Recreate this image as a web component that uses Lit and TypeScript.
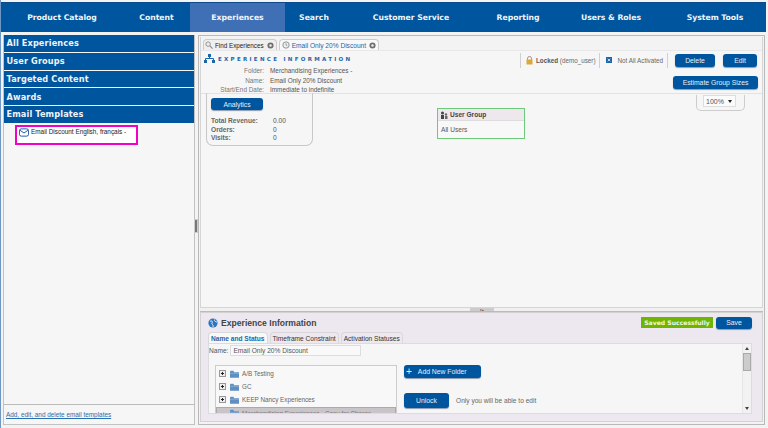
import { LitElement, html, css } from "lit";
import { customElement } from "lit/decorators.js";

const gear = html`<svg class="gear" viewBox="0 0 8 8" width="7" height="7"><circle cx="4" cy="4" r="3.5" fill="#6f6f6f"/><circle cx="4" cy="4" r="1.4" fill="#eee"/></svg>`;
const folder = html`<svg viewBox="0 0 12 10" width="9" height="8"><path d="M0 1.5 L0 10 L12 10 L12 2.5 L5.5 2.5 L4.5 .5 L1 .5 Z" fill="#5f8fc0"/><path d="M0 4 H12" stroke="#8fb4d8" stroke-width="1"/></svg>`;
const plusBox = html`<svg viewBox="0 0 7 7" width="7" height="7"><rect x=".5" y=".5" width="6" height="6" fill="#eee" stroke="#999"/><path d="M2 3.5H5M3.5 2V5" stroke="#222"/></svg>`;

const navItems: [string, number, boolean][] = [
  ["Product Catalog", 122, false],
  ["Content", 67, false],
  ["Experiences", 95, true],
  ["Search", 58, false],
  ["Customer Service", 136, false],
  ["Reporting", 78, false],
  ["Users & Roles", 108, false],
  ["System Tools", 100, false],
];
const sections = ["All Experiences", "User Groups", "Targeted Content", "Awards", "Email Templates"];

@customElement("app-root")
export class AppRoot extends LitElement {
  static styles = css`
    :host { display: flex; flex-direction: column; width: 768px; height: 428px; overflow: hidden; background: #f3f3f3; font-family: "Liberation Sans", Arial, sans-serif; font-size: 7px; color: #555; box-sizing: border-box; padding-top: 2px; border-left: 1px solid #6f97c4; }
    * { box-sizing: border-box; }
    .nav { display: flex; height: 30px; background: #00559f; margin: 0 2px 0 0; border-top: 1px solid #0a4a8c; flex: none; }
    .nav div { display: flex; align-items: center; justify-content: center; color: #f2f6fa; font: bold 7.7px "DejaVu Sans", sans-serif; flex: none; }
    .nav .on { background: #3f70b6; }
    .main { flex: 1; display: flex; padding: 3px 3px 3px 2px; min-height: 0; }
    .left { width: 192px; margin-right: 3px; flex: none; border: 1px solid #c2c2c2; border-top: 0; display: flex; flex-direction: column; background: #f6f6f6; position: relative; }
    .acc { height: 16.75px; background: #00559f; color: #eef3f8; font: bold 8.2px "DejaVu Sans", sans-serif; display: flex; align-items: center; padding-left: 2.5px; margin-bottom: 1px; flex: none; letter-spacing: .12px; }
    .tree { flex: 1; padding: 1px 0 0 11px; }
    .sel { width: 123px; height: 20px; border: 2.5px solid #f000c8; display: flex; align-items: flex-start; gap: 2px; padding: 0 0 0 2px; font-size: 6.4px; color: #222; background: #fff; line-height: 10px; }
    .foot { height: 20px; border-top: 1px solid #bbb; display: flex; align-items: center; padding: 0 2px; color: #2a6fb0; text-decoration: underline; font-size: 6.4px; }
    .grip { position: absolute; right: -4px; top: 184px; width: 4px; height: 14px; background: #777; border: 1px solid #ccc; }
    .right { flex: 1; border: 1px solid #b9b9b9; padding: 1px 1px 2px; display: flex; flex-direction: column; background: #f3f3f3; min-width: 0; }
    .top { height: 271px; flex: none; background: #f6f6f6; border: 1px solid #d5d5d5; border-top: 0; position: relative; overflow: hidden; }
    .tabs { display: flex; height: 13px; padding: 2px 0 0 2px; gap: 2px; background: #f3f3f3; }
    .tab { display: flex; align-items: center; gap: 2px; height: 11px; padding: 0 2px 0 1px; border: 1px solid #ccc; border-bottom: 0; border-radius: 4px 4px 0 0; color: #222; font-size: 6.3px; background: #efefef; }
    .tab.on { color: #1c66a8; background: #f8f8f8; font-size: 6.6px; padding-left: 2px; }
    .gear { margin-left: 1px; }
    .info { height: 44px; display: flex; justify-content: space-between; border-bottom: 1px solid #eddfd8; background: #f6f6f6; border-top: 1px solid #e8e8e8; padding: 0 0 0 3px; }
    .head { display: flex; align-items: center; gap: 3px; height: 13px; margin-top: 1px; color: #1c66a8; font: bold 5.5px "DejaVu Sans", sans-serif; letter-spacing: 2.3px; }
    .kv { display: grid; grid-template-columns: 60px auto; column-gap: 6px; font-size: 6.4px; line-height: 9.5px; margin-top: 1px; color: #555; }
    .kv span:nth-child(odd) { text-align: right; color: #777; }
    .acts { display: flex; flex-direction: column; align-items: flex-end; padding: 2px 4px 0 0; gap: 9px; }
    .row { display: flex; align-items: center; height: 14px; font-size: 6.3px; color: #666; margin-right: 1px; }
    .stat { display: flex; align-items: center; gap: 3px; height: 15px; border-left: 1px solid #d0d0d0; padding: 0 4px 0 5px; }
    .stat.second { padding-left: 6px; }
    .stat b { color: #555; }
    .sep { border-left: 1px solid #d0d0d0; height: 15px; margin-right: 7px; }
    .btn { background: #00559f; color: #e8eef5; border-radius: 3px; display: flex; align-items: center; justify-content: center; font-size: 6.8px; box-shadow: 0 1px 1px #8a9bb0; flex: none; }
    .card { position: absolute; left: 5px; top: 56px; width: 107px; height: 53px; border: 1px solid #c8c8c8; border-top: 0; border-radius: 0 0 7px 7px; padding: 5px 5px 0 4px; font-size: 6.6px; }
    .stats { display: grid; grid-template-columns: 62px auto; line-height: 8.6px; margin-top: 7px; color: #555; }
    .stats b { font-weight: bold; color: #666; }
    .group { position: absolute; left: 236px; top: 71px; width: 88px; height: 31px; border: 1px solid #6fc97a; background: #f8f8f8; font-size: 6.6px; }
    .group .t { height: 12px; background: #eee8ee; border-bottom: 1px solid #ddd; display: flex; align-items: center; gap: 2px; padding-left: 2px; font-weight: bold; color: #444; }
    .group .b { padding: 5px 3px; color: #555; }
    .zoom { position: absolute; left: 495px; top: 58px; width: 49px; height: 16px; border: 1px solid #ccc; border-top: 0; border-radius: 0 0 5px 5px; padding: 0 0 0 6px; }
    .zoom div { width: 33px; height: 12px; border: 1px solid #ddd; background: #fbfbfb; display: flex; align-items: center; justify-content: space-between; padding: 0 3px 0 2px; color: #555; font-size: 7px; }
    .zoom i { border: 2px solid transparent; border-top: 3px solid #222; border-bottom: 0; display: block; }
    .split { height: 4px; flex: none; display: flex; justify-content: center; align-items: center; background: #f0f0f0; border-bottom: 1px solid #bbb; }
    .split span { width: 24px; height: 3px; background: #ccc; color: #333; font-size: 3px; display: flex; align-items: center; justify-content: center; }
    .bottom { flex: 1; background: #ede8ef; border: 1px solid #d2d2d2; padding: 0 10px 0 7px; display: flex; flex-direction: column; min-height: 0; }
    .bhead { display: flex; align-items: center; height: 19px; flex: none; }
    .bhead .ttl { font: bold 8.6px "Liberation Sans", sans-serif; color: #444; margin-left: 3px; flex: 1; }
    .saved { background: #6fb400; color: #f0f7e0; font: bold 6.1px "DejaVu Sans", sans-serif; height: 11px; width: 72px; display: flex; align-items: center; justify-content: center; margin-right: 3px; }
    .btabs { display: flex; gap: 2px; height: 11px; flex: none; padding-left: 0; }
    .btabs div { height: 11px; border: 1px solid #d8d8d8; border-bottom: 0; border-radius: 4px 4px 0 0; padding: 0 2px; background: #ede8ef; display: flex; align-items: center; color: #333; font-size: 6.6px; }
    .btabs .on { background: #f8f8f8; color: #1c66a8; font-weight: bold; font-size: 6.6px; }
    .pane { height: 71px; flex: none; background: #f6f6f6; border: 1px solid #dcdcdc; position: relative; display: flex; overflow: hidden; }
    .content { flex: 1; padding: 1px 0 0 0; min-width: 0; }
    .name { display: flex; align-items: center; gap: 2px; height: 11px; font-size: 6.6px; }
    .name span:last-child { width: 131px; height: 11px; border: 1px solid #ddd; background: #f9f9f9; padding-left: 2px; line-height: 9px; }
    .cols { display: flex; margin: 9px 0 0 6px; gap: 7px; }
    .tbox { width: 182px; height: 48px; border: 1px solid #ccc; border-bottom: 0; overflow: hidden; background: #f8f8f8; padding-top: 1px; }
    .ti { display: flex; align-items: center; gap: 4px; height: 13.2px; padding-left: 3px; font-size: 6.3px; color: #666; }
    .ti span { margin-left: -1px; }
    .ti.sel2 { background: #c8c4c8; border: 1px solid #aaa; color: #777; }
    .ctl { display: flex; flex-direction: column; gap: 15px; }
    .unlock { display: flex; align-items: center; gap: 7px; font-size: 6.6px; color: #666; }
    .sb { width: 9px; flex: none; border-left: 1px solid #e6e6e6; background: #f2f2f2; display: flex; flex-direction: column; align-items: center; justify-content: space-between; padding: 3px 0 3px; }
    .sb .thumb { width: 8px; height: 18px; background: #ccc; border: 1px solid #aaa; margin-top: 3px; margin-bottom: auto; }
    .sb i { border: 2px solid transparent; display: block; }
  `;

  render() {
    return html`
      <div class="nav">${navItems.map(([t, w, on]) => html`<div class=${on ? "on" : ""} style="width:${w}px">${t}</div>`)}</div>
      <div class="main">
        <div class="left">
          ${sections.map((s) => html`<div class="acc">${s}</div>`)}
          <div class="tree">
            <div class="sel">
              <svg viewBox="0 0 11 9" width="10" height="9" style="flex:none;margin-top:1px"><rect x=".5" y=".5" width="10" height="8" rx="2" fill="#fff" stroke="#0a4f9c"/><path d="M1 2 L5.5 5 L10 2" fill="none" stroke="#0a4f9c"/></svg>
              <span>Email Discount English, français -</span>
            </div>
          </div>
          <div class="foot">Add, edit, and delete email templates</div>
          <div class="grip"></div>
        </div>
        <div class="right">
          <div class="top">
            <div class="tabs">
              <div class="tab"><svg viewBox="0 0 9 9" width="8" height="8"><circle cx="3.5" cy="3.5" r="2.5" fill="#eee" stroke="#888"/><path d="M5.5 5.5L8.5 8.5" stroke="#888" stroke-width="1.3"/></svg>Find Experiences ${gear}</div>
              <div class="tab on"><svg viewBox="0 0 9 9" width="8" height="8"><circle cx="4.5" cy="4.5" r="3.6" fill="#eee" stroke="#888"/><path d="M4.5 2.5V4.5L6 5.5" fill="none" stroke="#7a9" /></svg>Email Only 20% Discount ${gear}</div>
            </div>
            <div class="info">
              <div>
                <div class="head">
                  <svg viewBox="0 0 11 9" width="11" height="9"><path d="M5.5 2V4.5M1.5 6.5V4.5H9.5V6.5" fill="none" stroke="#1c66a8"/><rect x="4" y="0" width="3" height="3" fill="#1c66a8"/><rect x="0" y="6" width="3" height="3" fill="#1c66a8"/><rect x="8" y="6" width="3" height="3" fill="#1c66a8"/></svg>
                  <span>EXPERIENCE INFORMATION</span>
                </div>
                <div class="kv">
                  <span>Folder:</span><span>Merchandising Experiences -</span>
                  <span>Name:</span><span>Email Only 20% Discount</span>
                  <span>Start/End Date:</span><span>Immediate to indefinite</span>
                </div>
              </div>
              <div class="acts">
                <div class="row">
                  <div class="stat">
                    <svg viewBox="0 0 7 9" width="7" height="9"><path d="M1.5 4V2.5a2 2 0 0 1 4 0V4" fill="none" stroke="#a88"/><rect x="0.5" y="3.5" width="6" height="5" fill="#d9a93a"/></svg>
                    <span><b>Locked</b> (demo_user)</span>
                  </div>
                  <div class="stat second">
                    <svg viewBox="0 0 7 7" width="6" height="6" style="margin-right:2px"><rect width="7" height="7" fill="#1c66a8"/><path d="M2 2L5 5M5 2L2 5" stroke="#dfe9f3"/></svg>
                    <span>Not All Activated</span>
                  </div>
                  <div class="sep"></div>
                  <div class="btn" style="width:40px;height:13px;margin-right:8px">Delete</div>
                  <div class="btn" style="width:34px;height:13px">Edit</div>
                </div>
                <div class="btn" style="width:85px;height:13px">Estimate Group Sizes</div>
              </div>
            </div>
            <div class="card">
              <div class="btn" style="width:52px;height:12px">Analytics</div>
              <div class="stats">
                <b>Total Revenue:</b><span>0.00</span>
                <b>Orders:</b><span>0</span>
                <b>Visits:</b><span>0</span>
              </div>
            </div>
            <div class="group">
              <div class="t"><svg viewBox="0 0 8 8" width="8" height="8"><circle cx="2.5" cy="2" r="1.5" fill="#444"/><rect x="1" y="4" width="3" height="4" fill="#444"/><circle cx="6" cy="3.5" r="1.2" fill="#666"/><rect x="5" y="5" width="2.5" height="3" fill="#666"/></svg>User Group</div>
              <div class="b">All Users</div>
            </div>
            <div class="zoom"><div><span>100%</span><i></i></div></div>
          </div>
          <div class="split"><span>▾▴</span></div>
          <div class="bottom">
            <div class="bhead">
              <svg viewBox="0 0 10 10" width="10" height="10"><circle cx="5" cy="5" r="4.6" fill="#2a78c0"/><path d="M2 3.5C4 2 5 4 4 5S6 7 5 9M6.5 1.5C6 3 8 4 9 4" fill="none" stroke="#e8f0f8" stroke-width="1"/></svg>
              <div class="ttl">Experience Information</div>
              <div class="saved">Saved Successfully</div>
              <div class="btn" style="width:36px;height:12px">Save</div>
            </div>
            <div class="btabs"><div class="on">Name and Status</div><div>Timeframe Constraint</div><div>Activation Statuses</div></div>
            <div class="pane">
              <div class="content">
                <div class="name"><span>Name:</span><span>Email Only 20% Discount</span></div>
                <div class="cols">
                  <div class="tbox">
                    <div class="ti">${plusBox}${folder}<span>A/B Testing</span></div>
                    <div class="ti">${plusBox}${folder}<span>GC</span></div>
                    <div class="ti">${plusBox}${folder}<span>KEEP Nancy Experiences</span></div>
                    <div class="ti sel2"><span style="width:7px"></span>${folder}<span>Merchandising Experiences - Copy for Charge</span></div>
                  </div>
                  <div class="ctl">
                    <div class="btn" style="width:77px;height:13px;gap:6px;justify-content:flex-start;padding-left:2px"><span style="font-size:10px;line-height:10px">+</span><span>Add New Folder</span></div>
                    <div class="unlock"><div class="btn" style="width:45px;height:15px">Unlock</div><span>Only you will be able to edit</span></div>
                  </div>
                </div>
              </div>
              <div class="sb">
                <i style="border-bottom:3px solid #444;border-top:0"></i>
                <div class="thumb"></div>
                <i style="border-top:3px solid #444;border-bottom:0"></i>
              </div>
            </div>
          </div>
        </div>
      </div>
    `;
  }
}
